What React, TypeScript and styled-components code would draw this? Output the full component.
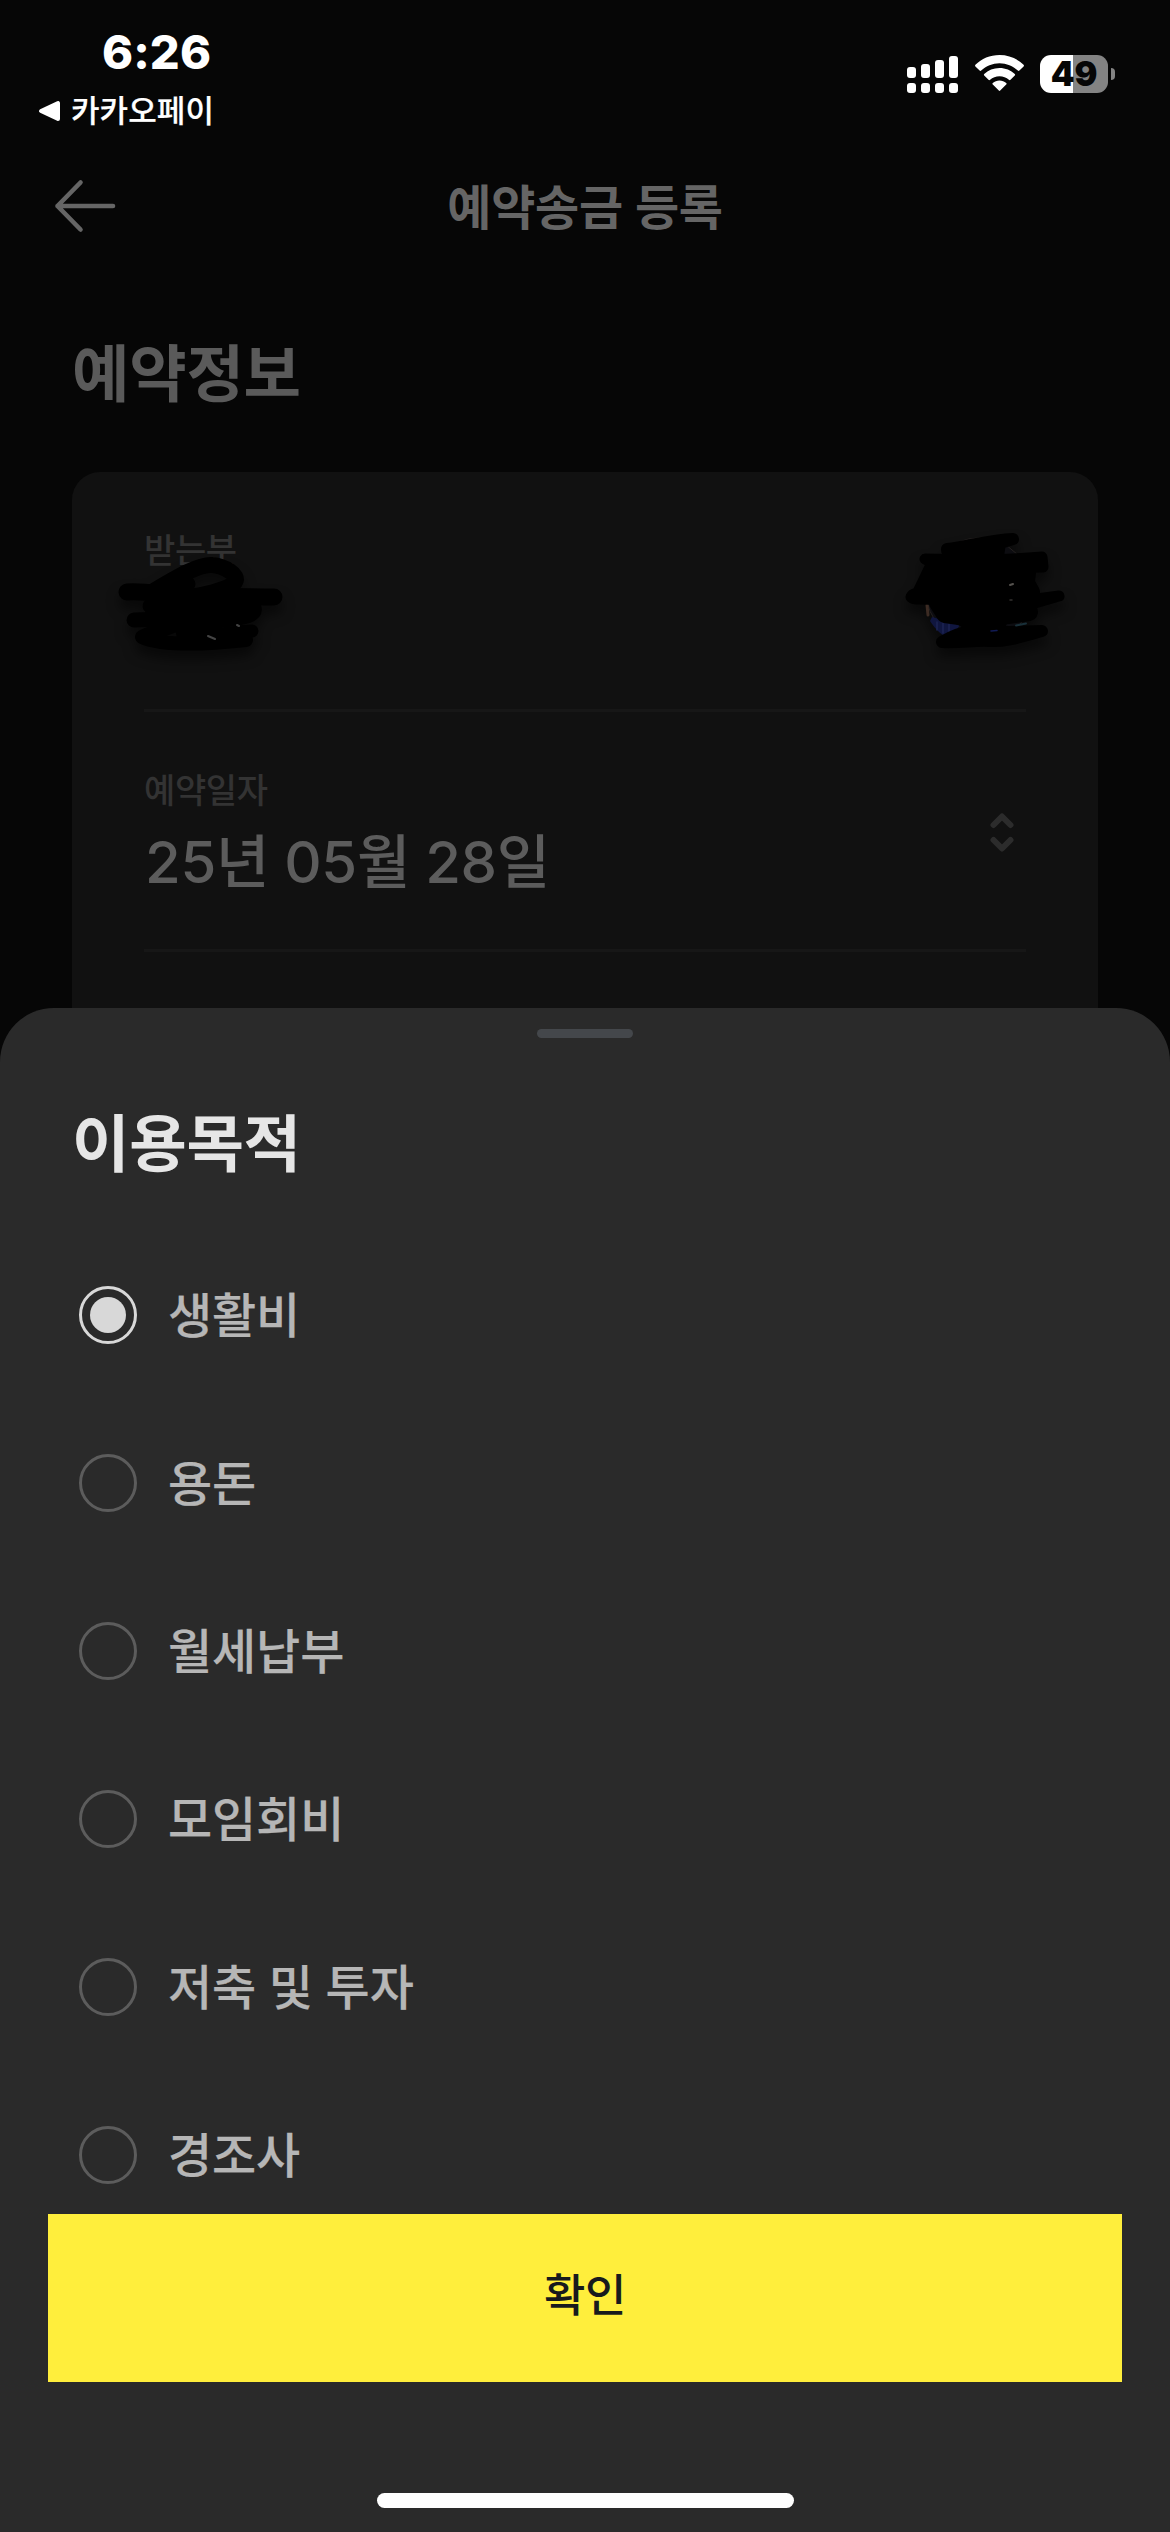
import React from "react";
import styled, { createGlobalStyle } from "styled-components";

const GlobalStyle = createGlobalStyle`
  * { box-sizing: border-box; }
  html, body { margin: 0; padding: 0; background: #060606; }
  body {
    font-family: Inter, "Noto Sans CJK KR", sans-serif;
    -webkit-font-smoothing: antialiased;
    overflow: hidden;
  }
`;

const Screen = styled.div`
  position: relative;
  width: 1170px;
  height: 2532px;
  overflow: hidden;
  background: #060606;
`;

const StatusBar = styled.div`
  display: flex;
  justify-content: space-between;
  height: 144px;
  padding: 0 55px 0 38px;
  color: #fff;
`;

const StatusLeft = styled.div`
  display: flex;
  flex-direction: column;
`;

const Clock = styled.div`
  margin: 30px 0 0 64px;
  height: 44px;
  line-height: 44px;
  font-size: 47px;
  font-weight: 800;
  letter-spacing: 0.1px;
`;

const BackLink = styled.div`
  display: flex;
  align-items: center;
  gap: 10px;
  height: 40px;
  margin-top: 17px;
`;

const BackLabel = styled.span`
  font-size: 31px;
  line-height: 40px;
  font-weight: 500;
  letter-spacing: 0.1px;
  -webkit-text-stroke: 0.2px currentColor;
`;

const StatusRight = styled.div`
  display: flex;
  align-items: flex-start;
  padding-top: 55px;
`;

const SignalIcon = styled.svg`
  margin-right: 17px;
`;

const WifiIcon = styled.svg`
  margin-right: 16px;
`;

const Battery = styled.div`
  width: 68px;
  height: 38px;
  border-radius: 11px;
  background: linear-gradient(90deg, #fff 0 33px, #838383 33px);
  color: #060606;
  font-size: 34px;
  line-height: 38px;
  font-weight: 900;
  letter-spacing: -0.2px;
  text-align: center;
`;

const BatteryCap = styled.div`
  width: 4px;
  height: 12px;
  margin: 13px 0 0 3px;
  border-radius: 0 6px 6px 0;
  background: #838383;
`;

const NavBar = styled.header`
  display: grid;
  grid-template-columns: 62px 1fr 62px;
  align-items: center;
  height: 124px;
  padding: 0 54px;
`;

const NavTitle = styled.h1`
  margin: 0;
  padding-top: 3px;
  color: #656565;
  font-size: 48px;
  line-height: 60px;
  font-weight: 600;
  letter-spacing: -0.2px;
  text-align: center;
`;

const SectionTitle = styled.h2`
  margin: 0;
  padding: 69px 0 0 72px;
  height: 204px;
  color: #5a5a5a;
  font-size: 62.5px;
  line-height: 74px;
  font-weight: 600;
  letter-spacing: -0.3px;
`;

const InfoCard = styled.section`
  margin: 0 72px;
  padding: 0 72px;
  height: 620px;
  border-radius: 28px;
  background: #111;
`;

const InfoRow = styled.div`
  position: relative;
  display: flex;
  justify-content: space-between;
  height: 240px;
  padding-top: 58px;
  border-bottom: 3px solid #171717;
`;

const InfoText = styled.div`
  display: flex;
  flex-direction: column;
`;

const InfoLabel = styled.span`
  height: 40px;
  padding-top: 1px;
  color: #333;
  font-size: 34px;
  line-height: 40px;
  font-weight: 500;
  letter-spacing: -0.4px;
`;

const InfoValue = styled.span`
  margin-top: 18px;
  padding-left: 1px;
  color: #5c5c5c;
  font-size: 58px;
  line-height: 68px;
  font-weight: 500;
  letter-spacing: -0.3px;
`;

const StepperIcon = styled.svg`
  margin: 43px 12px 0 0;
`;

const Scribble = styled.svg<{ $x: number; $y: number }>`
  position: absolute;
  left: ${(p) => p.$x}px;
  top: ${(p) => p.$y}px;
  overflow: visible;
  filter: drop-shadow(0 9px 6px rgba(0, 0, 0, 0.5));
`;

const Sheet = styled.div`
  position: absolute;
  left: 0;
  right: 0;
  top: 1008px;
  bottom: 0;
  display: flex;
  flex-direction: column;
  border-radius: 54px 54px 0 0;
  background: #2a2a2a;
`;

const Grabber = styled.div`
  width: 96px;
  height: 9px;
  margin: 21px auto 0;
  border-radius: 5px;
  background: #44474b;
`;

const SheetTitle = styled.h2`
  margin: 69px 0 0 72px;
  height: 74px;
  color: #e6e6e6;
  font-size: 62.5px;
  line-height: 74px;
  font-weight: 600;
  letter-spacing: -0.3px;
`;

const OptionList = styled.div`
  display: flex;
  flex-direction: column;
  height: 1033px;
  padding-top: 50px;
  overflow: hidden;
`;

const Option = styled.label`
  display: flex;
  flex: none;
  align-items: center;
  gap: 31px;
  height: 168px;
  padding-left: 79px;
`;

const Radio = styled.span<{ $checked?: boolean }>`
  display: grid;
  place-items: center;
  width: 58px;
  height: 58px;
  border-radius: 50%;
  border: 3px solid ${(p) => (p.$checked ? "#d8d8d8" : "#5c5c5c")};
`;

const RadioDot = styled.span`
  width: 36px;
  height: 36px;
  border-radius: 50%;
  background: #d8d8d8;
`;

const OptionLabel = styled.span`
  padding-top: 2px;
  color: #b6b6b6;
  font-size: 48px;
  line-height: 60px;
  font-weight: 500;
  letter-spacing: -0.1px;
  -webkit-text-stroke: 0.2px currentColor;
`;

const ConfirmButton = styled.button`
  flex: none;
  height: 168px;
  margin: 0 48px;
  padding: 0 0 5px;
  border: 0;
  background: #ffee3c;
  color: #181a1d;
  font-family: inherit;
  font-size: 45px;
  line-height: 60px;
  font-weight: 500;
  letter-spacing: -0.4px;
`;

const HomeIndicator = styled.div`
  width: 417px;
  height: 15px;
  margin: 111px auto 0;
  border-radius: 8px;
  background: #fff;
`;

const options = ["생활비", "용돈", "월세납부", "모임회비", "저축 및 투자", "경조사"];

const bars = [
  { x: 0, top: 12 },
  { x: 14, top: 9 },
  { x: 28, top: 5 },
  { x: 42, top: 1 },
];

export default function App() {
  return (
    <Screen>
      <GlobalStyle />
      <StatusBar>
        <StatusLeft>
          <Clock>6:26</Clock>
          <BackLink>
            <svg width="23" height="24" viewBox="0 0 23 24">
              <path d="M3 12 20 4v16z" fill="#fff" stroke="#fff" strokeWidth="4" strokeLinejoin="round" />
            </svg>
            <BackLabel>카카오페이</BackLabel>
          </BackLink>
        </StatusLeft>
        <StatusRight>
          <SignalIcon width="51" height="38" viewBox="0 0 51 38" fill="#fff">
            {bars.map((b) => (
              <g key={b.x}>
                <rect x={b.x} y={b.top} width="9" height={23 - b.top} rx="3" />
                <rect x={b.x} y="28" width="9" height="10" rx="3" />
              </g>
            ))}
          </SignalIcon>
          <WifiIcon width="49" height="37" viewBox="0 0 49 37" fill="#fff">
            <path d="M24.500 0C34 0 42.500 3.700 48.600 9.800c.5.500.5 1.100 0 1.600l-4.200 4.200c-.5.500-1.100.5-1.600 0C38 11 31.500 8.200 24.500 8.200S11 11 6.200 15.600c-.5.500-1.100.5-1.600 0L.4 11.400c-.5-.5-.5-1.100 0-1.600C6.500 3.700 15 0 24.500 0z" />
            <path d="M24.500 13c6 0 11.300 2.300 15.300 6 .5.500.5 1.100 0 1.600l-4.300 4.200c-.5.500-1.100.5-1.600 0-2.500-2.200-5.800-3.600-9.400-3.600s-6.900 1.400-9.400 3.600c-.5.500-1.100.5-1.600 0l-4.300-4.200c-.5-.5-.5-1.100 0-1.600 4-3.700 9.300-6 15.300-6z" />
            <path d="M24.500 25.500c2.600 0 4.900.9 6.700 2.400.5.400.5 1.100 0 1.600l-6 6.100c-.4.500-1 .5-1.400 0l-6-6.100c-.5-.5-.5-1.200 0-1.600 1.800-1.500 4.100-2.400 6.700-2.400z" />
          </WifiIcon>
          <Battery>49</Battery>
          <BatteryCap />
        </StatusRight>
      </StatusBar>

      <NavBar>
        <svg width="62" height="54" viewBox="0 0 62 54" fill="none" stroke="#656565" strokeWidth="4.600" strokeLinecap="round" strokeLinejoin="round">
          <path d="M26.500 3.500 3.500 27l23 23.500M3.500 27H59" />
        </svg>
        <NavTitle>예약송금 등록</NavTitle>
      </NavBar>

      <SectionTitle>예약정보</SectionTitle>

      <InfoCard>
        <InfoRow>
          <InfoText>
            <InfoLabel>받는분</InfoLabel>
          </InfoText>
          <Scribble $x={-26} $y={84} width="166" height="98" viewBox="118 556 166 98" fill="none" stroke="#000" strokeLinecap="round" strokeLinejoin="round">
            <path d="M127 592C150 590 170 598 200 597S250 597 274 597" strokeWidth="17" />
            <path d="M152 592C180 575 200 564 212 565S240 575 235 582S205 596 165 600" strokeWidth="16" />
            <path d="M188 584 182 590M150 606C185 600 230 602 250 609C230 622 190 618 134 620" strokeWidth="15" />
            <path d="M160 604C190 600 220 602 245 607S190 622 158 616" strokeWidth="24" />
            <path d="M150 618C170 612 190 609 240 610" strokeWidth="15" />
            <path d="M186 618C172 630 150 632 142 637C160 645 200 645 246 640" strokeWidth="14" />
            <path d="M180 628C205 640 225 632 252 631" strokeWidth="13" />
            <path d="M184 634 200 640 215 641" strokeWidth="16" />
            <path d="M208 636l7 3M237 625l2 1" stroke="#444" strokeWidth="2" />
          </Scribble>
          <Scribble $x={760} $y={60} width="162" height="118" viewBox="904 532 162 118" fill="none" stroke="#000" strokeLinecap="round" strokeLinejoin="round">
            <circle cx="979" cy="591" r="53" fill="#0c0c10" stroke="#24201f" strokeWidth="1" />
            <path d="M930 621C936 630 942 636 950 639L960 625 932 617Z" fill="#10163f" stroke="none" />
            <path d="M937 622v8M943 623v10M949 624v8" stroke="#1c2554" strokeWidth="1.500" />
            <path d="M927 605l1 10" stroke="#3c2b23" strokeWidth="3" />
            <path d="M947 549C970 546 990 540 1013 539L1000 543 998 556 948 558Z" fill="#000" strokeWidth="12" />
            <path d="M925 559C960 560 1000 561 1042 557L1043 567C1010 567 975 570 938 566Z" fill="#000" strokeWidth="11" />
            <path d="M932 565 918 594C911 595 911 598 918 598L1000 600 1028 586 1030 568Z" fill="#000" strokeWidth="13" />
            <path d="M911 597C960 600 1000 605 1059 596L1035 603 920 598Z" fill="#000" strokeWidth="11" />
            <path d="M945 573L1026 583 1031 592 1020 600 1029 612 980 619 945 614 938 603Z" fill="#000" strokeWidth="18" />
            <path d="M960 618 975 626 1000 622" fill="#000" strokeWidth="14" />
            <path d="M942 642C970 625 990 631 1010 632L1042 631C1020 637 1005 642 990 641S960 643 942 642Z" fill="#000" strokeWidth="12" />
            <path d="M1010 585l3-1" stroke="#55524e" strokeWidth="2" />
            <path d="M1010 600h2" stroke="#33312f" strokeWidth="1.500" />
            <path d="M1016 625.500l10-2" stroke="#193039" strokeWidth="2" />
            <path d="M991 631l6-.5" stroke="#111b55" strokeWidth="1.500" />
          </Scribble>
        </InfoRow>
        <InfoRow>
          <InfoText>
            <InfoLabel>예약일자</InfoLabel>
            <InfoValue>25년 05월 28일</InfoValue>
          </InfoText>
          <StepperIcon width="24" height="39" viewBox="0 0 24 39" fill="none" stroke="#2c2c2c" strokeWidth="6" strokeLinecap="round" strokeLinejoin="round">
            <path d="M3.500 12 12 3.500 20.500 12M3.500 27 12 35.500 20.500 27" />
          </StepperIcon>
        </InfoRow>
      </InfoCard>

      <Sheet>
        <Grabber />
        <SheetTitle>이용목적</SheetTitle>
        <OptionList>
          {options.map((name, i) => (
            <Option key={name}>
              <Radio $checked={i === 0}>{i === 0 && <RadioDot />}</Radio>
              <OptionLabel>{name}</OptionLabel>
            </Option>
          ))}
        </OptionList>
        <ConfirmButton>확인</ConfirmButton>
        <HomeIndicator />
      </Sheet>
    </Screen>
  );
}
